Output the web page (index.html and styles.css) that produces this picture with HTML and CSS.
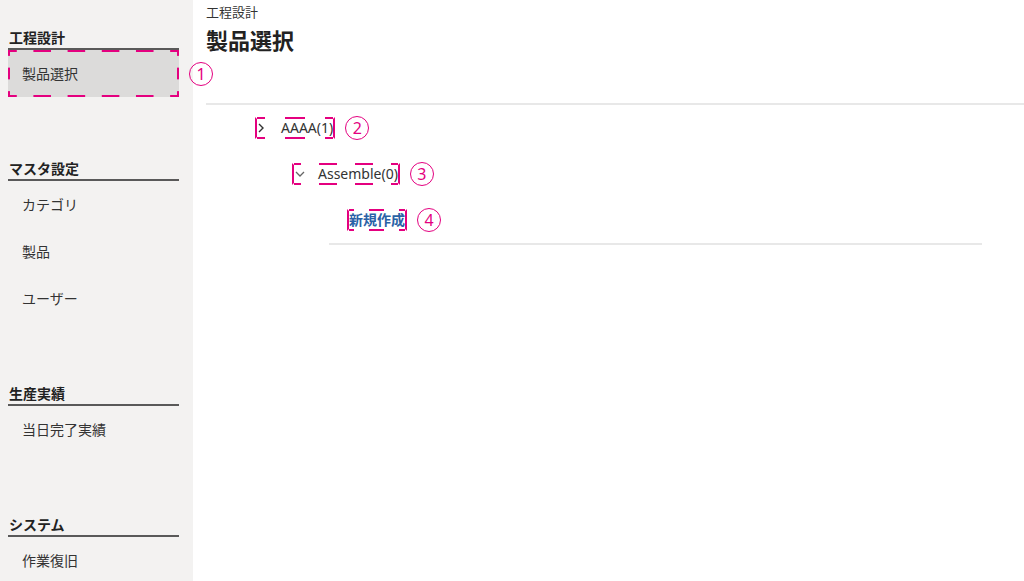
FILE: index.html
```html
<!DOCTYPE html>
<html lang="ja">
<head>
    <meta charset="UTF-8">
    <meta name="viewport" content="width=device-width, initial-scale=1.0">
    <title>製品選択</title>
    <link rel="stylesheet" href="styles.css">
</head>
<body>

    <div class="app">
        <aside class="sidebar">
            <section class="nav-group">
                <h3 class="nav-title">工程設計</h3>
                <ul class="nav-list">
                    <li class="nav-item is-active">製品選択<span class="callout callout-side">1</span></li>
                </ul>
            </section>

            <section class="nav-group">
                <h3 class="nav-title">マスタ設定</h3>
                <ul class="nav-list">
                    <li class="nav-item">カテゴリ</li>
                    <li class="nav-item">製品</li>
                    <li class="nav-item">ユーザー</li>
                </ul>
            </section>

            <section class="nav-group">
                <h3 class="nav-title">生産実績</h3>
                <ul class="nav-list">
                    <li class="nav-item">当日完了実績</li>
                </ul>
            </section>

            <section class="nav-group">
                <h3 class="nav-title">システム</h3>
                <ul class="nav-list">
                    <li class="nav-item">作業復旧</li>
                </ul>
            </section>
        </aside>

        <main class="content">
            <header class="page-header">
                <div class="breadcrumb">工程設計</div>
                <h1 class="page-title">製品選択</h1>
            </header>

            <div class="tree">
                <div class="tree-row">
                    <span class="mark">
                        <span class="caret">
                            <svg width="6" height="10" viewBox="0 0 6 10"><path d="M1 1 L5 5 L1 9" fill="none" stroke="#333" stroke-width="1.4"/></svg>
                        </span>
                        <span class="label">AAAA(1)</span>
                    </span>
                    <span class="callout">2</span>
                </div>

                <div class="tree-row level-1">
                    <span class="mark">
                        <span class="caret">
                            <svg width="10" height="6" viewBox="0 0 10 6"><path d="M1 1 L5 5 L9 1" fill="none" stroke="#666" stroke-width="1.3"/></svg>
                        </span>
                        <span class="label">Assemble(0)</span>
                    </span>
                    <span class="callout">3</span>
                </div>

                <div class="tree-row level-2">
                    <span class="mark">
                        <a class="link" href="#">新規作成</a>
                    </span>
                    <span class="callout">4</span>
                </div>
            </div>
        </main>
    </div>

</body>
</html>
```

FILE: styles.css
```css
body {
    margin: 0;
    font-family: 'Segoe UI', 'Noto Sans', 'Noto Sans CJK JP', sans-serif;
    color: #333;
    background-color: #ffffff;
}
.app {
    display: flex;
    height: 100vh;
    overflow: hidden;
}
.sidebar {
    width: 193px;
    flex: none;
    box-sizing: border-box;
    padding: 28px 14px 0 8px;
    background-color: #f3f2f1;
}
.nav-group + .nav-group {
    margin-top: 62px;
}
.nav-title {
    margin: 0;
    padding-left: 1px;
    font-size: 14px;
    line-height: 20px;
    font-weight: bold;
    color: #222;
    border-bottom: 2px solid #595959;
}
.nav-list {
    list-style: none;
    margin: 0;
    padding: 0;
}
.nav-item {
    position: relative;
    height: 47px;
    box-sizing: border-box;
    padding-left: 14px;
    line-height: 47px;
    font-size: 14px;
    color: #333;
}
/* dashed frame: half dashes at the corners, spread evenly along each side */
.nav-item.is-active {
    border: 2px solid transparent;
    padding-left: 12px;
    line-height: 43px;
    background-color: #dcdbda;
    background-image:
        linear-gradient(to right, #e4007f 25%, transparent 25% 75%, #e4007f 75%),
        linear-gradient(to right, #e4007f 25%, transparent 25% 75%, #e4007f 75%),
        linear-gradient(to bottom, #e4007f 25%, transparent 25% 75%, #e4007f 75%),
        linear-gradient(to bottom, #e4007f 25%, transparent 25% 75%, #e4007f 75%);
    background-size: 34px 2px, 34px 2px, 2px 24px, 2px 24px;
    background-position: left top, left bottom, left top, right top;
    background-repeat: round no-repeat, round no-repeat, no-repeat round, no-repeat round;
    background-origin: border-box;
}
.content {
    flex: 1;
    padding-left: 13px;
    background-color: #ffffff;
}
.page-header {
    height: 105px;
    box-sizing: border-box;
    padding-top: 3px;
    border-bottom: 2px solid #e8e8e8;
}
.breadcrumb {
    font-size: 13px;
    line-height: 18px;
    color: #333;
}
.page-title {
    margin: 4px 0 0;
    font-size: 22px;
    line-height: 30px;
    font-weight: bold;
    color: #222;
}
.tree {
    padding: 0 42px 0 49px;
}
.tree-row {
    display: flex;
    align-items: center;
    gap: 10px;
    height: 46px;
}
.level-1 {
    margin-left: 37px;
}
.level-2 {
    margin-left: 74px;
    padding-left: 18px;
    border-bottom: 2px solid #e8e8e8;
}
.mark {
    display: inline-flex;
    align-items: center;
    height: 22px;
    box-sizing: border-box;
    border: 2px solid transparent;
    border-left-color: #e4007f;
    border-right-color: #e4007f;
    line-height: 18px;
    background-image:
        linear-gradient(to right, #e4007f 25%, transparent 25% 75%, #e4007f 75%),
        linear-gradient(to right, #e4007f 25%, transparent 25% 75%, #e4007f 75%);
    background-size: 36px 2px;
    background-position: left top, left bottom;
    background-repeat: round no-repeat;
    background-origin: border-box;
}
.caret {
    display: flex;
    align-items: center;
    width: 24px;
    padding-left: 1px;
    box-sizing: border-box;
}
.label {
    font-size: 14px;
    color: #333;
}
.link {
    font-size: 14px;
    font-weight: bold;
    color: #2a62a6;
    text-decoration: none;
}
.callout {
    display: flex;
    align-items: center;
    justify-content: center;
    width: 24px;
    height: 24px;
    box-sizing: border-box;
    border: 1.5px solid #e4007f;
    border-radius: 50%;
    font-family: 'Noto Sans', sans-serif;
    font-size: 16px;
    line-height: 1;
    color: #e4007f;
}
.callout-side {
    position: absolute;
    top: 50%;
    left: calc(100% + 12px);
    transform: translateY(-50%);
}
```
